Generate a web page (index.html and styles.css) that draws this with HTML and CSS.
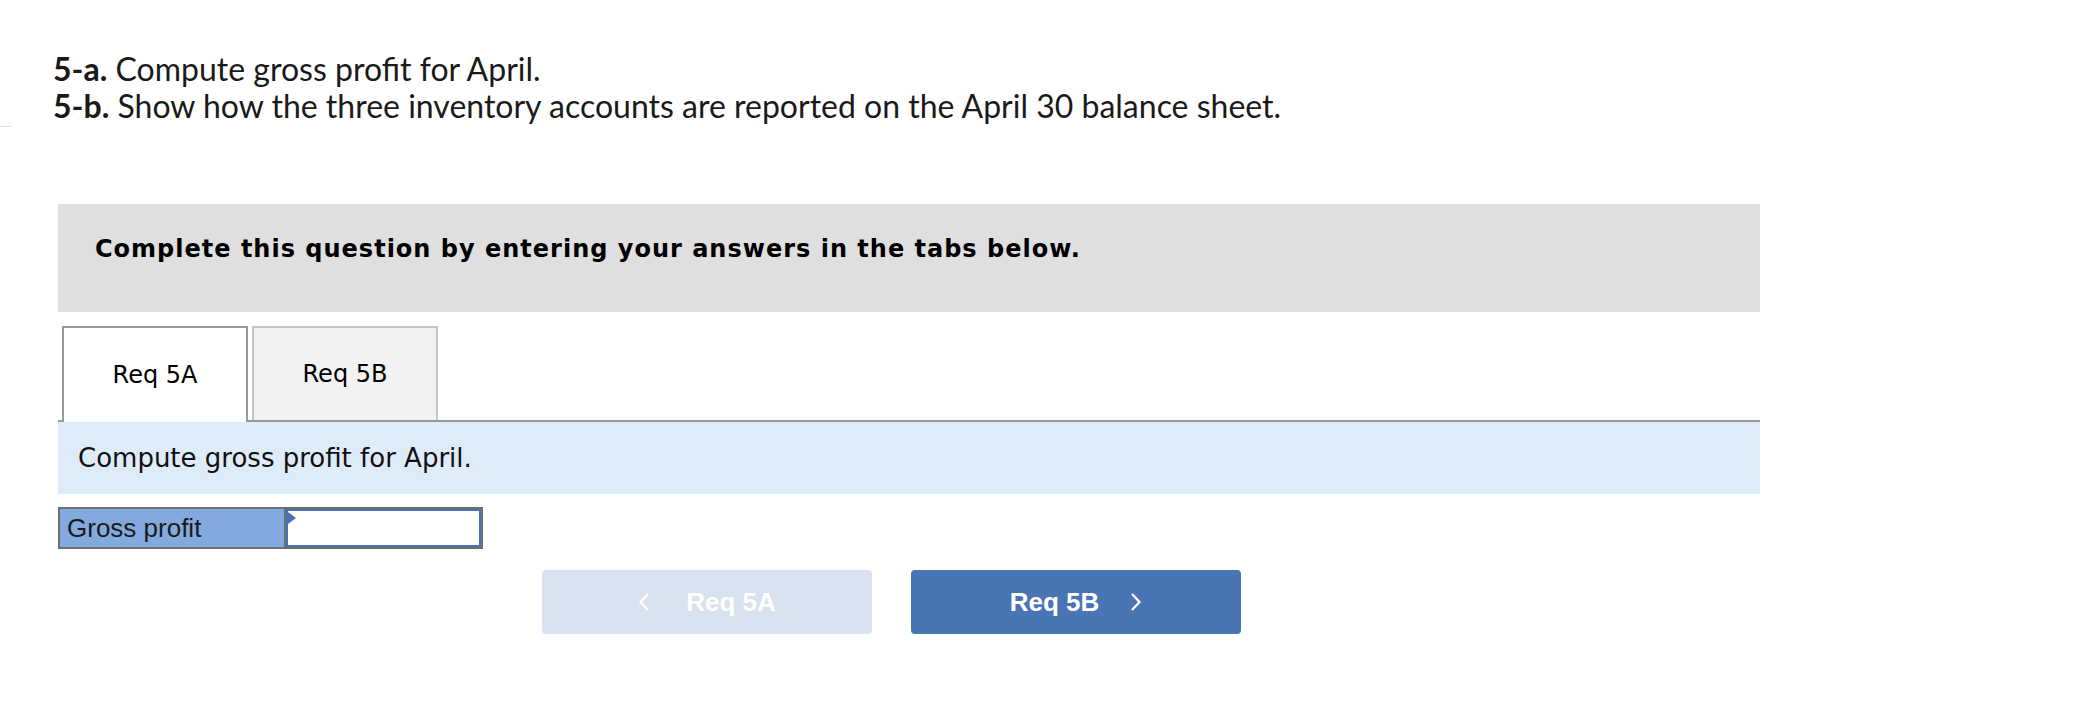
FILE: index.html
```html
<!DOCTYPE html>
<html lang="en">
<head>
<meta charset="utf-8">
<title>Req 5A</title>
<link rel="stylesheet" href="styles.css">
</head>
<body>
<div class="page">
  <div class="intro">
    <p class="intro-line"><b>5-a.</b> Compute gross profit for April.</p>
    <p class="intro-line"><b>5-b.</b> Show how the three inventory accounts are reported on the April 30 balance sheet.</p>
  </div>
  <div class="rule"></div>
  <div class="question">
    <div class="instructions">Complete this question by entering your answers in the tabs below.</div>
    <div class="tabs">
      <div class="tab tab-active">Req 5A</div>
      <div class="tab">Req 5B</div>
    </div>
    <div class="prompt">Compute gross profit for April.</div>
    <div class="answer-row">
      <div class="answer-label">Gross profit</div>
      <div class="answer-input"><span class="flag"></span></div>
    </div>
    <div class="nav">
      <button class="nav-btn nav-prev" type="button">
        <svg class="chev" width="12" height="20" viewBox="0 0 12 20"><path d="M10 2 L2.5 10 L10 18" fill="none" stroke="#fff" stroke-width="2.2"/></svg>
        <span>Req 5A</span>
      </button>
      <button class="nav-btn nav-next" type="button">
        <span>Req 5B</span>
        <svg class="chev" width="12" height="20" viewBox="0 0 12 20"><path d="M2 2 L9.5 10 L2 18" fill="none" stroke="#fff" stroke-width="2.2"/></svg>
      </button>
    </div>
  </div>
</div>
</body>
</html>
```
FILE: styles.css
```css
body {
  margin: 0;
  background: #fff;
}

.intro {
  padding: 50px 0 0 53px;
  font-family: Lato, "Open Sans", sans-serif;
  font-size: 32px;
  line-height: 37px;
  color: #1a1a1a;
}

.intro-line {
  margin: 0;
}

.rule {
  margin-top: 2px;
  width: 12px;
  height: 1px;
  background: #e3e3e3;
}

.question {
  margin: 77px 0 0 58px;
  width: 1702px;
}

.instructions {
  height: 108px;
  box-sizing: border-box;
  background: #dfdfdf;
  padding: 30px 0 0 37px;
  font-family: "DejaVu Sans", Verdana, sans-serif;
  font-weight: bold;
  font-size: 24px;
  letter-spacing: 1px;
  line-height: 30px;
  color: #000;
}

.tabs {
  display: flex;
  gap: 4px;
  margin-top: 14px;
  padding-left: 4px;
  height: 94px;
  border-bottom: 2px solid #999;
}

.tab {
  width: 186px;
  box-sizing: border-box;
  border: 2px solid #c6c6c6;
  border-bottom: none;
  background: #f2f2f2;
  display: flex;
  align-items: center;
  justify-content: center;
  font-family: "DejaVu Sans", Verdana, sans-serif;
  font-size: 24px;
  color: #000;
}

.tab-active {
  border-color: #999;
  background: #fff;
  margin-bottom: -2px;
}

.prompt {
  height: 72px;
  background: #deebf8;
  display: flex;
  align-items: center;
  padding-left: 20px;
  font-family: "DejaVu Sans", Verdana, sans-serif;
  font-size: 26px;
  color: #111;
}

.answer-row {
  display: flex;
  margin-top: 13px;
  width: 425px;
  height: 42px;
  box-sizing: border-box;
  border: 2px solid #6f6f6f;
}

.answer-label {
  width: 226px;
  box-sizing: border-box;
  background: #82aadf;
  border-right: 2px solid #6f6f6f;
  padding-left: 7px;
  display: flex;
  align-items: center;
  font-family: "Liberation Sans", Arial, sans-serif;
  font-size: 26px;
  color: #1a1a1a;
}

.answer-input {
  flex: 1;
  position: relative;
  background: #fff;
  border: 2px solid #4a72b4;
}

.flag {
  position: absolute;
  left: 0;
  top: 1px;
  width: 0;
  height: 0;
  border-left: 8px solid #4a72b4;
  border-top: 6px solid transparent;
  border-bottom: 6px solid transparent;
}

.nav {
  display: flex;
  gap: 39px;
  margin: 21px 0 0 484px;
}

.nav-btn {
  width: 330px;
  height: 64px;
  border: none;
  border-radius: 4px;
  display: flex;
  align-items: center;
  justify-content: center;
  font-family: "Liberation Sans", Arial, sans-serif;
  font-weight: bold;
  font-size: 26px;
  color: #fff;
  padding: 0;
}

.nav-prev {
  background: #d9e3ef;
  gap: 36px;
}

.nav-next {
  background: #4a75b4;
  gap: 31px;
}

.chev {
  display: block;
}
```
